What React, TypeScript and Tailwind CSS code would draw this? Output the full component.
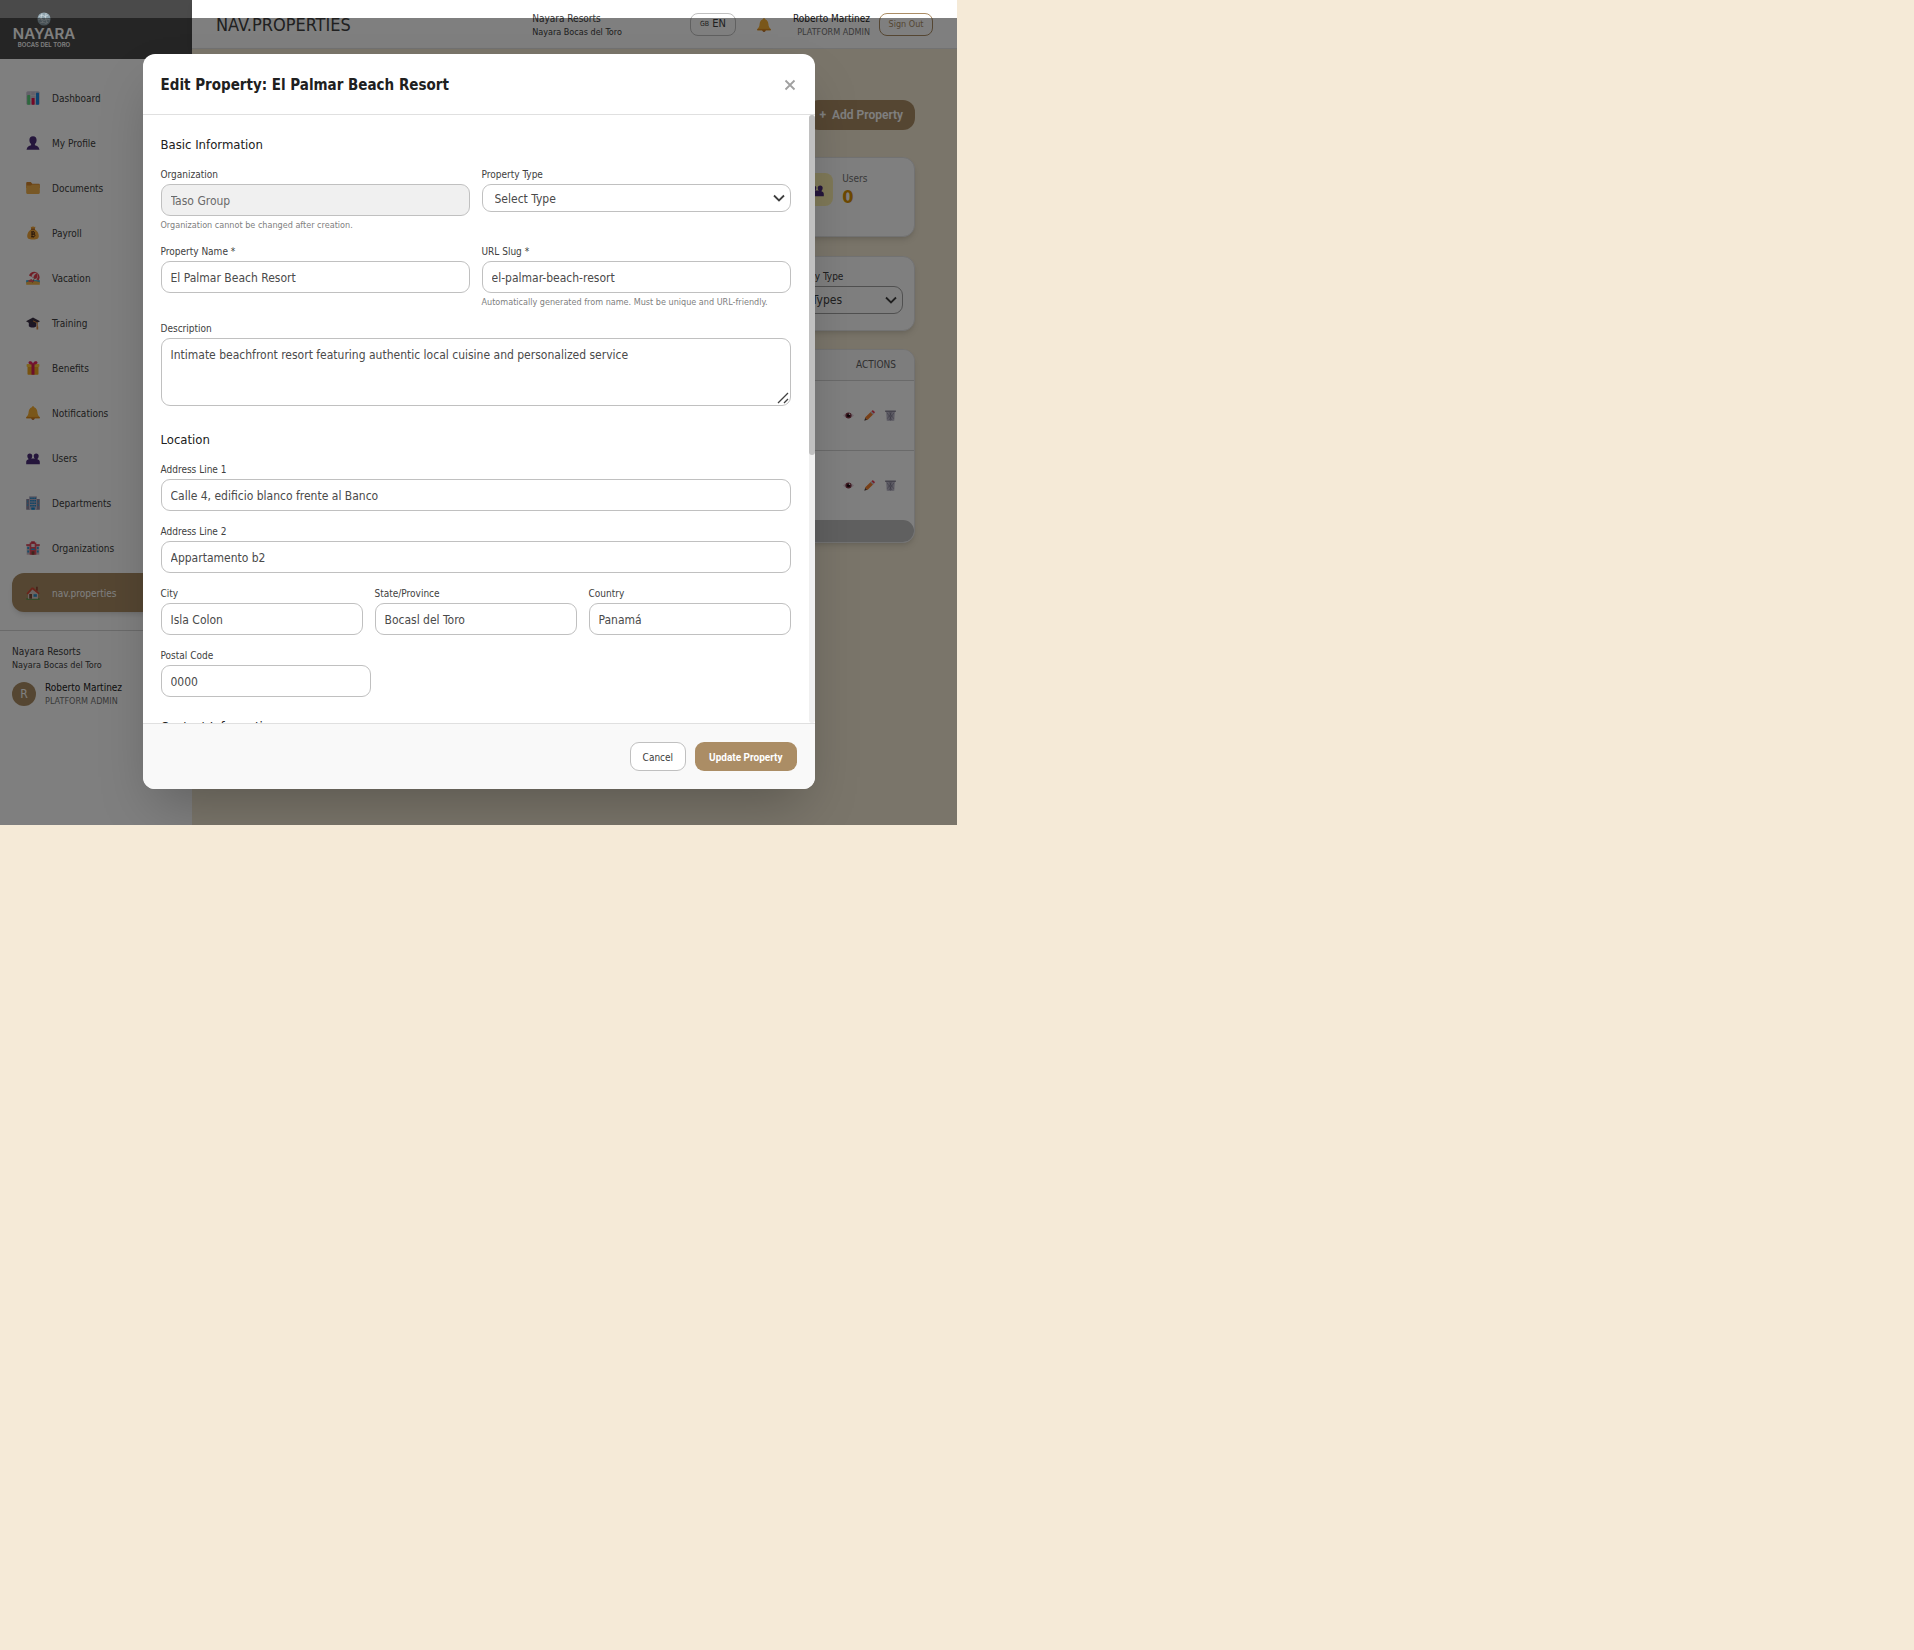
import React, { type ReactNode } from 'react';

type IconProps = { className?: string };

const svg = (children: ReactNode) =>
  function Icon({ className = 'size-3.5' }: IconProps) {
    return (
      <svg viewBox="0 0 14 14" className={className} aria-hidden="true">
        {children}
      </svg>
    );
  };

const ChartIcon = svg(
  <>
    <rect x="0.3" y="0.3" width="13.4" height="13.4" rx="1.5" fill="#c9c3d4" />
    <path d="M0.5 4.5h13M0.5 9h13M4.8 0.5v13M9.3 0.5v13" stroke="#e8e4ee" strokeWidth="0.5" />
    <rect x="1.2" y="4" width="3" height="9.7" rx="0.6" fill="#5bd07a" />
    <rect x="5.6" y="7" width="3" height="6.7" rx="0.6" fill="#e8104c" />
    <rect x="10" y="1.8" width="3" height="11.9" rx="0.6" fill="#1b87e0" />
  </>,
);
const PersonIcon = svg(
  <path
    d="M7 0.3c2.4 0 3.6 1.6 3.6 3.8 0 1.8-.7 3.2-1.7 4v1.2c2.2.5 4 1.5 4.6 4.4H.5C1.100 10.800 2.900 9.800 5.100 9.300V8.100C4.100 7.300 3.400 5.900 3.400 4.100 3.400 1.900 4.600.3 7 .3z"
    fill="#4b2d78"
  />,
);
const FolderIcon = svg(
  <>
    <path d="M.2 2.200C.2 1.500.7 1 1.400 1h3.400l1.500 1.700h6.300c.7 0 1.200.5 1.200 1.200v3H.2z" fill="#d7872c" />
    <path d="M.2 4.600h4.700l1.400-1.100h6.300c.7 0 1.200.5 1.200 1.200v7.100c0 .7-.5 1.200-1.200 1.200H1.400c-.7 0-1.200-.5-1.200-1.200z" fill="#f0b04c" />
  </>,
);
const MoneyIcon = svg(
  <>
    <path d="M4.700.8c.8.5 1.500-.4 2.300-.3.900-.1 1.600.8 2.500.3L8.700 3.200C11 4.500 12.800 7.200 12.800 10c0 2.400-1.500 3.600-5.800 3.600S1.200 12.400 1.200 10c0-2.800 1.800-5.500 4.100-6.800z" fill="#f2a63a" />
    <path d="M5 3.200h4" stroke="#a45a1c" strokeWidth="1" />
    <path d="M5.300 6h2.300c1.500 0 1.500 2 0 2.100H5.700h2c1.700 0 1.700 2.500 0 2.500H5.300M6 5.200v6.300M7.400 5.200v.8M7.400 10.600v.9" fill="none" stroke="#4a2a1a" strokeWidth="0.9" />
  </>,
);
const BeachIcon = svg(
  <>
    <path d="M.2 9.200h13.600v2.600H.2z" fill="#2aa6d8" />
    <path d="M.2 11.200c3-1.200 8-1.600 13.600-.2v2.700H.2z" fill="#f2b44a" />
    <path d="M3 4.600C4 1 8.300-.4 11.200 1.700c2.600 1.900 3 5.500 1.300 7.700z" fill="#e23c4c" />
    <path d="M5.400 5.600C6 3 8.200 1.300 11.200 1.700 12.300 3.800 12 6.600 10.600 8.400z" fill="#f6e9ea" />
    <path d="M7.400 6.500C8 4.400 9.300 2.700 11.200 1.700c.7 2 .3 4.400-1.200 6.300z" fill="#e23c4c" />
    <path d="M8.500 7 6.400 11.600" stroke="#7a5240" strokeWidth="0.8" />
    <path d="M2 9.500 5.500 8l3 3H3z" fill="#e85564" />
  </>,
);
const CapIcon = svg(
  <>
    <path d="M2.800 6v4.200c1.600 1.800 6 1.800 7.600 0V6z" fill="#3a2d4f" />
    <path d="M7 1.500 14 5.300 7 9.100 0 5.300z" fill="#3b3044" />
    <path d="M7 4.900 11.300 6.800v4.400" fill="none" stroke="#d8873c" strokeWidth="1" />
    <path d="M10.500 10.500h1.700v3h-1.700z" fill="#d8873c" />
  </>,
);
const GiftIcon = svg(
  <>
    <rect x="1.500" y="4.500" width="11" height="9.200" rx="0.800" fill="#f1a71e" />
    <rect x="0.600" y="3" width="12.800" height="3" rx="0.700" fill="#ffc93f" />
    <rect x="5.500" y="3" width="3" height="10.700" fill="#d61f58" />
    <path d="M7 3.400C4.500 3.600 2.400 2.900 2.500 1.600 2.700-.2 6-.2 7 2.400 8-.2 11.300-.2 11.500 1.600 11.600 2.900 9.500 3.600 7 3.400z" fill="#e8265e" />
  </>,
);
const BellIcon = svg(
  <>
    <circle cx="7" cy="12.300" r="1.600" fill="#b5651d" />
    <path d="M7 .2c.7 0 1.200.5 1.200 1.100 2.200.8 3 2.600 3.200 4.800.2 2.500.9 3.600 2.300 5.200v1H.3v-1c1.400-1.600 2.100-2.700 2.300-5.200.2-2.200 1-4 3.200-4.800C5.800.7 6.300.2 7 .2z" fill="#f5ae35" />
    <path d="M.3 10.900h13.400v1.400H.3z" fill="#dc8a1f" />
  </>,
);
const UsersIcon = svg(
  <>
    <path d="M3.800 2.400c1.600 0 2.500 1.100 2.500 2.700 0 1.200-.4 2.100-1.100 2.700v.7c1 .3 1.700.9 1.800 1.800v2.900H.2v-2.500c.1-1.200.8-1.900 2.200-2.200v-.7C1.700 7.200 1.300 6.300 1.300 5.100c0-1.600.9-2.700 2.500-2.700z" fill="#4b2d78" />
    <path d="M10.200 2.400c1.600 0 2.500 1.100 2.500 2.700 0 1.200-.4 2.100-1.100 2.700v.7c1.400.3 2.100 1 2.200 2.200v2.500H7v-2.900c.1-.9.800-1.500 1.800-1.800v-.7C8.100 7.200 7.700 6.300 7.700 5.100c0-1.600.9-2.700 2.500-2.700z" fill="#4b2d78" />
    <path d="M4.500 7.500h5v3.500h-5z" fill="#4b2d78" />
  </>,
);
const OfficeIcon = svg(
  <>
    <rect x="0.200" y="3" width="3.800" height="10.700" rx="0.500" fill="#8d87a0" />
    <rect x="10" y="3" width="3.800" height="10.700" rx="0.500" fill="#8d87a0" />
    <rect x="3" y="0.200" width="8" height="13.500" rx="0.600" fill="#b9b4c8" />
    <path
      d="M4.200 1.500h1.500V3H4.200zM6.300 1.500h1.500V3H6.300zM8.400 1.500h1.500V3H8.400zM4.200 4h1.500v1.500H4.200zM6.300 4h1.500v1.500H6.300zM8.400 4h1.500v1.500H8.400zM4.200 6.500h1.500V8H4.200zM6.300 6.500h1.500V8H6.300zM8.400 6.500h1.500V8H8.400zM4.200 9h1.500v1.500H4.200zM6.300 9h1.500v1.500H6.300zM8.400 9h1.500v1.500H8.400zM5.300 11.500h3.500v2.200H5.300z"
      fill="#0e86cf"
    />
    <path d="M1.100 4.500h1.100v2H1.100zM1.100 8h1.100v2H1.100zM11.800 4.500h1.100v2h-1.100zM11.800 8h1.100v2h-1.100z" fill="#3f9ccf" />
  </>,
);
const HotelIcon = svg(
  <>
    <rect x="0.700" y="4" width="12.600" height="9.700" fill="#cdb9c4" />
    <path d="M.2 3.200h4v1.600h-4zM9.800 3.200h4v1.600h-4z" fill="#d8334a" />
    <rect x="3.700" y="1.500" width="6.600" height="12.200" fill="#e34a5c" />
    <path d="M5.200.3h3.600v1.800H5.200z" fill="#d8334a" />
    <rect x="5.300" y="3" width="3.400" height="3" fill="#f1e3e8" />
    <path d="M1.300 7h1.800M1.300 10.500h1.800M10.900 7h1.800M10.900 10.500h1.800" stroke="#2b9bd6" strokeWidth="1.800" />
    <path d="M5 8.300h4" stroke="#2b9bd6" strokeWidth="1.400" />
    <rect x="5.600" y="10.300" width="2.800" height="3.400" fill="#7c4a3a" />
  </>,
);
const HouseIcon = svg(
  <>
    <path d="M.3 12.300h13.400v1.400H.3z" fill="#4e9a4a" />
    <path d="M2 6.500 6.500 2.800 12 6.800v6H2z" fill="#d9c8c2" />
    <path d="M10 .8h1.800v4H10z" fill="#8c4a34" />
    <path d="M.4 7.600 5.600 1.500h1.700l6.300 5.800-1 1L6.400 3.600 2 8.600z" fill="#d24a36" />
    <rect x="3.200" y="8" width="2.800" height="4.700" fill="#7a4a34" />
    <rect x="7.500" y="8.200" width="3.400" height="2.600" fill="#2b8fc4" />
  </>,
);
const EyeIcon = svg(
  <>
    <path d="M0 7C2.600 3 11.400 3 14 7 11.400 11.200 2.600 11.200 0 7z" fill="#e6d3de" />
    <circle cx="7" cy="7" r="3.900" fill="#7d3242" />
    <circle cx="7" cy="7" r="2" fill="#1c0c12" />
    <circle cx="8.300" cy="5.500" r="1" fill="#f3eaef" />
  </>,
);
const PencilIcon = svg(
  <>
    <path d="M.4 13.600 1.500 9.900 4.200 12.500z" fill="#5b4038" />
    <path d="M1.300 9.700 8.800 2.200l3.100 3.100-7.500 7.500z" fill="#f07f2e" />
    <path d="M8.200 2.800 9.500 1.500l3.100 3.100-1.300 1.300z" fill="#c9c3d4" />
    <path d="M9.500 1.500 10.600.4c.8-.6 3.800 2.200 3.100 3.100l-1.100 1.100z" fill="#ee3d55" />
  </>,
);
const TrashIcon = svg(
  <>
    <path d="M.2.600h13.600v2H.2z" fill="#8c889a" />
    <path d="M1.500 2.600h11l-.7 11.100H2.200z" fill="#bdb9ca" />
    <path d="M2.600 3.500 9 13M5.500 3 11 11M11.400 3.500 5 13M8.500 3 3 11M7 3v10.500" stroke="#77738a" strokeWidth="0.700" />
  </>,
);

function Chevron() {
  return (
    <svg
      viewBox="0 0 12 8"
      className="pointer-events-none absolute right-1.5 top-1/2 h-2 w-3 -translate-y-1/2"
      aria-hidden="true"
    >
      <path d="M1 1.500 6 6.500 11 1.500" fill="none" stroke="#3f3f3f" strokeWidth="1.800" />
    </svg>
  );
}

const navItems = [
  { label: 'Dashboard', Icon: ChartIcon },
  { label: 'My Profile', Icon: PersonIcon },
  { label: 'Documents', Icon: FolderIcon },
  { label: 'Payroll', Icon: MoneyIcon },
  { label: 'Vacation', Icon: BeachIcon },
  { label: 'Training', Icon: CapIcon },
  { label: 'Benefits', Icon: GiftIcon },
  { label: 'Notifications', Icon: BellIcon },
  { label: 'Users', Icon: UsersIcon },
  { label: 'Departments', Icon: OfficeIcon },
  { label: 'Organizations', Icon: HotelIcon },
  { label: 'nav.properties', Icon: HouseIcon, active: true },
];

function Logo() {
  return (
    <div className="flex w-16 flex-col items-center text-white">
      <svg viewBox="0 0 14 14" className="size-3.5" aria-hidden="true">
        <circle cx="7" cy="7" r="6.600" fill="#8fa3ad" />
        <path
          d="M2 4.500 5 3l3 1.500L11 3M1 8l3-1.500L7 8.500 10 7l3 1M3 11l3-1 3 1.500 2-1.500M5 1.500 4 6l2 5M9 1 8.500 6l1.500 5"
          fill="none"
          stroke="#d5e0e4"
          strokeWidth="0.700"
        />
      </svg>
      <span className="mt-px font-[Inter] text-[15px] leading-[14px] font-semibold">NAYARA</span>
      <span className="mt-px font-[Inter] text-[6px] leading-[6px] font-semibold">BOCAS DEL TORO</span>
    </div>
  );
}

function Sidebar() {
  return (
    <aside className="flex w-48 shrink-0 flex-col bg-white shadow-lg">
      <div className="flex h-[59px] items-start bg-[#4a4a4a] px-3 pt-3">
        <Logo />
      </div>
      <nav className="flex flex-col gap-1.5 border-b border-[#d4d4d4] px-3 pt-[19px] pb-[18px]">
        {navItems.map(({ label, Icon, active }) => (
          <a
            key={label}
            href="#"
            className={
              active
                ? 'flex h-[39px] items-center gap-3 rounded-xl bg-[#ab8d65] px-3.5 pt-px text-white shadow-md'
                : 'flex h-[39px] items-center gap-3 rounded-xl px-3.5 pt-px text-[#404040]'
            }
          >
            <Icon />
            {label}
          </a>
        ))}
      </nav>
      <div className="px-3 pt-3.5">
        <p className="leading-[14px] text-[#404040]">Nayara Resorts</p>
        <p className="text-[9px] leading-3 text-[#404040]">Nayara Bocas del Toro</p>
        <div className="mt-2.5 flex items-center gap-[9px]">
          <span className="flex size-6 items-center justify-center rounded-full bg-[#ab8d65] text-xs text-white">R</span>
          <div>
            <p className="leading-[14px] text-[#202020]">Roberto Martinez</p>
            <p className="text-[9px] leading-3 text-[#737373]">PLATFORM ADMIN</p>
          </div>
        </div>
      </div>
    </aside>
  );
}

function TopBar() {
  return (
    <header className="flex h-[49px] shrink-0 items-center border-b border-[#e5e5e5] bg-white px-6 pt-px shadow-md">
      <h1 className="text-lg text-[#404040]">NAV.PROPERTIES</h1>
      <div className="mr-[68px] ml-auto">
        <p className="leading-[14px] text-[#404040]">Nayara Resorts</p>
        <p className="text-[9px] leading-3 text-[#404040]">Nayara Bocas del Toro</p>
      </div>
      <button className="flex h-[23px] w-[46px] items-center justify-center gap-[3px] rounded-lg border border-[#c0c0c0] text-[11px] text-[#404040]">
        <span className="text-[7px]">GB</span>EN
      </button>
      <button className="ml-[21px]" aria-label="Notifications">
        <BellIcon />
      </button>
      <div className="ml-[22px] text-right">
        <p className="leading-[14px] text-[#202020]">Roberto Martinez</p>
        <p className="text-[9px] leading-3 text-[#737373]">PLATFORM ADMIN</p>
      </div>
      <button className="ml-[9px] h-[23px] w-[54px] rounded-lg border border-[#ab8d65] text-[9px] text-[#ab8d65]">
        Sign Out
      </button>
    </header>
  );
}

function PageContent() {
  return (
    <main className="flex-1 bg-[#f4ead4] py-[51px] pr-[42px] pl-6">
      <div className="flex justify-end">
        <button className="flex h-[30px] items-center gap-1.5 rounded-xl bg-[#ab8d65] px-3 font-[Roboto] text-xs font-semibold text-white">
          <span>+</span>Add Property
        </button>
      </div>
      <section className="mt-[27px] grid grid-cols-5">
        <div className="col-start-5 flex h-20 gap-[9px] rounded-xl border border-[#e5e5e5] bg-white p-[15px] pl-6 shadow-md">
          <span className="flex size-[33px] shrink-0 items-center justify-center rounded-lg bg-[#fef3b0]">
            <UsersIcon />
          </span>
          <div>
            <p className="leading-3 text-[#737373]">Users</p>
            <p className="text-lg leading-6 font-bold text-[#d99000]">0</p>
          </div>
        </div>
      </section>
      <section className="mt-[19px] flex h-[75px] justify-end rounded-xl border border-[#e5e5e5] bg-white p-[11px] shadow-md">
        <div className="w-[121px]">
          <label htmlFor="filter-type" className="block leading-[18px] text-[#404040]">
            Property Type
          </label>
          <div className="relative">
            <select
              id="filter-type"
              className="h-7 w-full appearance-none rounded-[9px] border border-[#a0a0a0] px-3 text-xs text-[#404040]"
            >
              <option>All Types</option>
            </select>
            <Chevron />
          </div>
        </div>
      </section>
      <section className="mt-[18px] overflow-hidden rounded-xl border border-[#e5e5e5] bg-white shadow-md">
        <table className="w-full">
          <thead>
            <tr className="h-[30px] border-b border-[#d4d4d4] bg-[#fafafa]">
              <th className="pr-[18px] text-right text-[10px] font-normal text-[#606060]">ACTIONS</th>
            </tr>
          </thead>
          <tbody>
            {[1, 2].map((row) => (
              <tr key={row} className="h-[70px] border-b border-[#d4d4d4] last:border-0">
                <td className="pr-[18px]">
                  <div className="flex justify-end gap-2.5">
                    <button aria-label="View">
                      <EyeIcon className="size-[11px]" />
                    </button>
                    <button aria-label="Edit">
                      <PencilIcon className="size-[11px]" />
                    </button>
                    <button aria-label="Delete">
                      <TrashIcon className="size-[11px]" />
                    </button>
                  </div>
                </td>
              </tr>
            ))}
          </tbody>
        </table>
        <div className="h-[22px] rounded-full bg-[#c0c0c0]" />
      </section>
    </main>
  );
}

const inputClass =
  'block h-8 w-full rounded-[9px] border border-[#c0c0c0] bg-white px-[9px] pt-0.5 text-xs text-[#4a4a4a] disabled:bg-[#f0f0f0] disabled:text-[#6a6a6a]';

type FieldProps = { id: string; label: string; value?: string; hint?: string; disabled?: boolean; children?: ReactNode };

function Field({ id, label, value, hint, disabled, children }: FieldProps) {
  return (
    <div>
      <label htmlFor={id} className="block leading-[18px] text-[#404040]">
        {label}
      </label>
      {children ?? <input id={id} defaultValue={value} disabled={disabled} className={inputClass} />}
      {hint && <p className="mt-[3px] text-[9px] leading-3 text-[#808080]">{hint}</p>}
    </div>
  );
}

function FormSection({ title, children }: { title: string; children?: ReactNode }) {
  return (
    <section>
      <h3 className="mb-[9px] text-[13px] leading-6 text-[#202020]">{title}</h3>
      <div className="flex flex-col gap-3">{children}</div>
    </section>
  );
}

function EditDialog() {
  return (
    <div
      role="dialog"
      aria-labelledby="dialog-title"
      className="flex h-full w-full max-w-2xl flex-col overflow-hidden rounded-xl bg-white shadow-2xl"
    >
      <div className="flex h-[61px] shrink-0 items-center justify-between border-b border-[#e0e0e0] px-[18px] pt-0.5">
        <h2 id="dialog-title" className="text-[15px] font-bold text-[#202020]">
          Edit Property: El Palmar Beach Resort
        </h2>
        <button aria-label="Close" className="p-px text-[#a0a0a0]">
          <svg viewBox="0 0 12 12" className="size-3" aria-hidden="true">
            <path d="M1.500 1.500l9 9M10.500 1.500l-9 9" stroke="currentColor" strokeWidth="1.800" />
          </svg>
        </button>
      </div>
      <div className="flex min-h-0 flex-1">
        <form className="flex min-w-0 flex-1 flex-col gap-[18px] overflow-y-auto p-[18px] [scrollbar-width:none]">
          <FormSection title="Basic Information">
            <div className="grid grid-cols-2 gap-3">
              <Field id="org" label="Organization" value="Taso Group" disabled hint="Organization cannot be changed after creation." />
              <Field id="type" label="Property Type">
                <div className="relative">
                  <select
                    id="type"
                    className="h-7 w-full appearance-none rounded-[9px] border border-[#c0c0c0] bg-white px-3 pt-px text-xs text-[#4a4a4a]"
                  >
                    <option>Select Type</option>
                  </select>
                  <Chevron />
                </div>
              </Field>
              <Field id="name" label="Property Name *" value="El Palmar Beach Resort" />
              <Field
                id="slug"
                label="URL Slug *"
                value="el-palmar-beach-resort"
                hint="Automatically generated from name. Must be unique and URL-friendly."
              />
            </div>
            <Field id="description" label="Description">
              <div className="relative pb-1">
                <textarea
                  id="description"
                  defaultValue="Intimate beachfront resort featuring authentic local cuisine and personalized service"
                  className="block h-[68px] w-full resize-none rounded-[9px] border border-[#c0c0c0] px-[9px] py-2 text-xs leading-4 text-[#4a4a4a]"
                />
                <svg viewBox="0 0 12 12" className="pointer-events-none absolute right-0.5 bottom-1.5 size-3" aria-hidden="true">
                  <path d="M1 11 11 1M7 11l4-4" stroke="#404040" strokeWidth="1.300" />
                </svg>
              </div>
            </Field>
          </FormSection>
          <FormSection title="Location">
            <Field id="address1" label="Address Line 1" value="Calle 4, edificio blanco frente al Banco" />
            <Field id="address2" label="Address Line 2" value="Appartamento b2" />
            <div className="grid grid-cols-3 gap-3">
              <Field id="city" label="City" value="Isla Colon" />
              <Field id="state" label="State/Province" value="Bocasl del Toro" />
              <Field id="country" label="Country" value="Panamá" />
            </div>
            <div className="w-1/3">
              <Field id="postal" label="Postal Code" value="0000" />
            </div>
          </FormSection>
          <FormSection title="Contact Information" />
        </form>
        <div className="w-1.5 shrink-0 rounded-full bg-[#f0f0f0]">
          <div className="h-[56%] rounded-full bg-[#c0c0c0]" />
        </div>
      </div>
      <div className="flex h-[66px] shrink-0 items-center justify-end gap-[9px] border-t border-[#e0e0e0] bg-[#f9f9f9] px-[18px]">
        <button className="h-[29px] rounded-[9px] border border-[#c0c0c0] bg-white px-3 pt-px text-[#404040]">Cancel</button>
        <button className="h-[29px] rounded-[9px] bg-[#ab8d65] px-3.5 pt-0.5 font-[Roboto] font-bold text-white">
          Update Property
        </button>
      </div>
    </div>
  );
}

export default function App() {
  return (
    <div className="min-h-screen bg-[#f5ead7] font-['DejaVu_Sans_Condensed','DejaVu_Sans',sans-serif] text-[10px]">
      <div className="relative flex h-[50vh] w-1/2 overflow-hidden">
        <Sidebar />
        <div className="flex min-w-0 flex-1 flex-col">
          <TopBar />
          <PageContent />
        </div>
        <div className="absolute inset-x-0 top-[18px] bottom-0 flex justify-center bg-black/50 px-6 py-9">
          <EditDialog />
        </div>
      </div>
    </div>
  );
}
